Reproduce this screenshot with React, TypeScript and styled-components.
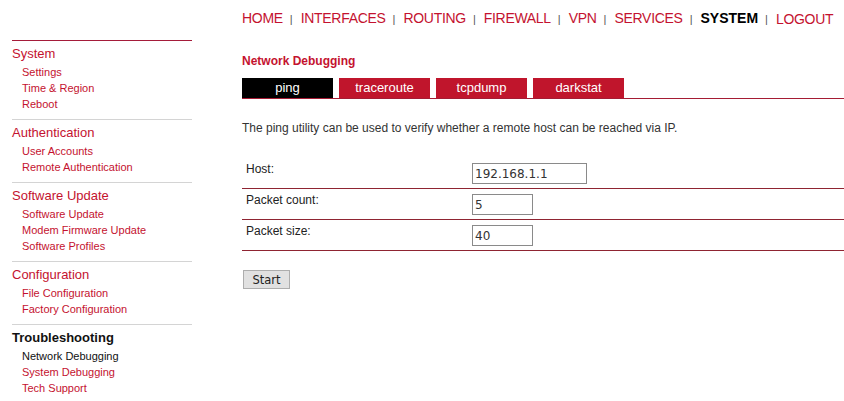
import styled, { createGlobalStyle } from "styled-components"

const GlobalStyle = createGlobalStyle`
  html, body {
    margin: 0;
    padding: 0;
    background: #ffffff;
  }
  body {
    font-family: "Liberation Sans", Arial, sans-serif;
    color: #333333;
  }
`

const RED = "#c4122f"
const DARK_RED = "#8f2432"

const sections = [
  { title: "System", items: ["Settings", "Time & Region", "Reboot"] },
  { title: "Authentication", items: ["User Accounts", "Remote Authentication"] },
  {
    title: "Software Update",
    items: ["Software Update", "Modem Firmware Update", "Software Profiles"],
  },
  { title: "Configuration", items: ["File Configuration", "Factory Configuration"] },
  {
    title: "Troubleshooting",
    items: ["Network Debugging", "System Debugging", "Tech Support"],
    active: "Network Debugging",
  },
]

const navItems = [
  "HOME",
  "INTERFACES",
  "ROUTING",
  "FIREWALL",
  "VPN",
  "SERVICES",
  "SYSTEM",
  "LOGOUT",
]

const tabs = ["ping", "traceroute", "tcpdump", "darkstat"]

const fields = [
  { label: "Host:", value: "192.168.1.1", wide: true },
  { label: "Packet count:", value: "5", wide: false },
  { label: "Packet size:", value: "40", wide: false },
]

const Page = styled.div`
  display: flex;
  align-items: flex-start;
  width: 844px;
  height: 401px;
  overflow: hidden;
`

const Sidebar = styled.aside`
  width: 180px;
  margin: 40px 0 0 12px;
  flex-shrink: 0;
`

const Section = styled.div<{ $first?: boolean }>`
  border-top: 1px solid ${(p) => (p.$first ? "#a51c3a" : "#d4d4d4")};
  padding: 5px 0 7px;
`

const SectionTitle = styled.div<{ $active?: boolean }>`
  font-size: 13px;
  line-height: 16px;
  margin-bottom: 2px;
  color: ${(p) => (p.$active ? "#111111" : RED)};
  font-weight: ${(p) => (p.$active ? "bold" : "normal")};
`

const SideLink = styled.a<{ $active?: boolean }>`
  display: block;
  padding-left: 10px;
  font-size: 11px;
  line-height: 16px;
  color: ${(p) => (p.$active ? "#111111" : RED)};
  text-decoration: none;
`

const Main = styled.main`
  flex: 1;
  margin-left: 50px;
  padding-top: 9px;
`

const Nav = styled.nav`
  display: flex;
  align-items: center;
  font-size: 14px;
  line-height: 18px;
  white-space: nowrap;
`

const NavLink = styled.a<{ $active?: boolean }>`
  color: ${(p) => (p.$active ? "#000000" : RED)};
  font-weight: ${(p) => (p.$active ? "bold" : "normal")};
  letter-spacing: ${(p) => (p.$active ? "0" : "-0.3px")};
  text-decoration: none;
`

const NavSep = styled.span`
  color: #555555;
  font-size: 11px;
  margin: 0 8px 0 7px;
`

const PageTitle = styled.h2`
  margin: 26px 0 0;
  font-size: 12px;
  line-height: 14px;
  font-weight: bold;
  color: ${RED};
`

const TabBar = styled.div`
  display: flex;
  gap: 6px;
  margin-top: 10px;
  border-bottom: 1px solid #a51c34;
`

const Tab = styled.div<{ $active?: boolean }>`
  width: 91px;
  height: 20px;
  line-height: 20px;
  text-align: center;
  font-size: 13px;
  color: #ffffff;
  background: ${(p) => (p.$active ? "#000000" : "#c0152c")};
`

const Intro = styled.p`
  margin: 22px 0 0;
  font-size: 12px;
  line-height: 14px;
  color: #333333;
`

const Form = styled.div`
  margin-top: 23px;
`

const Row = styled.div`
  display: grid;
  grid-template-columns: 230px 1fr;
  align-items: start;
  height: 30px;
  border-bottom: 1px solid ${DARK_RED};
`

const Label = styled.label`
  padding: 4px 0 0 4px;
  font-size: 12px;
  line-height: 14px;
  color: #222222;
`

const Input = styled.input<{ $wide?: boolean }>`
  box-sizing: border-box;
  width: ${(p) => (p.$wide ? "115px" : "61px")};
  height: 21px;
  margin-top: 5px;
  padding: 1px 2px 0;
  border: 1px solid #8a8a8a;
  font-family: "DejaVu Sans", Tahoma, sans-serif;
  font-size: 12px;
  color: #333333;
  background: #ffffff;
  outline: none;
`

const Button = styled.button`
  box-sizing: border-box;
  margin-top: 19px;
  margin-left: 1px;
  width: 47px;
  height: 19px;
  padding: 0;
  border: 1px solid #adadad;
  background: #e1e1e1;
  font-family: "DejaVu Sans", Tahoma, sans-serif;
  font-size: 11.5px;
  color: #222222;
`

export default function App() {
  return (
    <Page>
      <GlobalStyle />
      <Sidebar>
        {sections.map((s, i) => (
          <Section key={s.title} $first={i === 0}>
            <SectionTitle $active={!!s.active}>{s.title}</SectionTitle>
            {s.items.map((item) => (
              <SideLink key={item} $active={item === s.active}>
                {item}
              </SideLink>
            ))}
          </Section>
        ))}
      </Sidebar>
      <Main>
        <Nav>
          {navItems.map((n, i) => (
            <span key={n}>
              <NavLink $active={n === "SYSTEM"}>{n}</NavLink>
              {i < navItems.length - 1 && <NavSep>|</NavSep>}
            </span>
          ))}
        </Nav>
        <PageTitle>Network Debugging</PageTitle>
        <TabBar>
          {tabs.map((t) => (
            <Tab key={t} $active={t === "ping"}>
              {t}
            </Tab>
          ))}
        </TabBar>
        <Intro>
          The ping utility can be used to verify whether a remote host can be
          reached via IP.
        </Intro>
        <Form>
          {fields.map((f) => (
            <Row key={f.label}>
              <Label>{f.label}</Label>
              <Input defaultValue={f.value} $wide={f.wide} />
            </Row>
          ))}
        </Form>
        <Button>Start</Button>
      </Main>
    </Page>
  )
}
